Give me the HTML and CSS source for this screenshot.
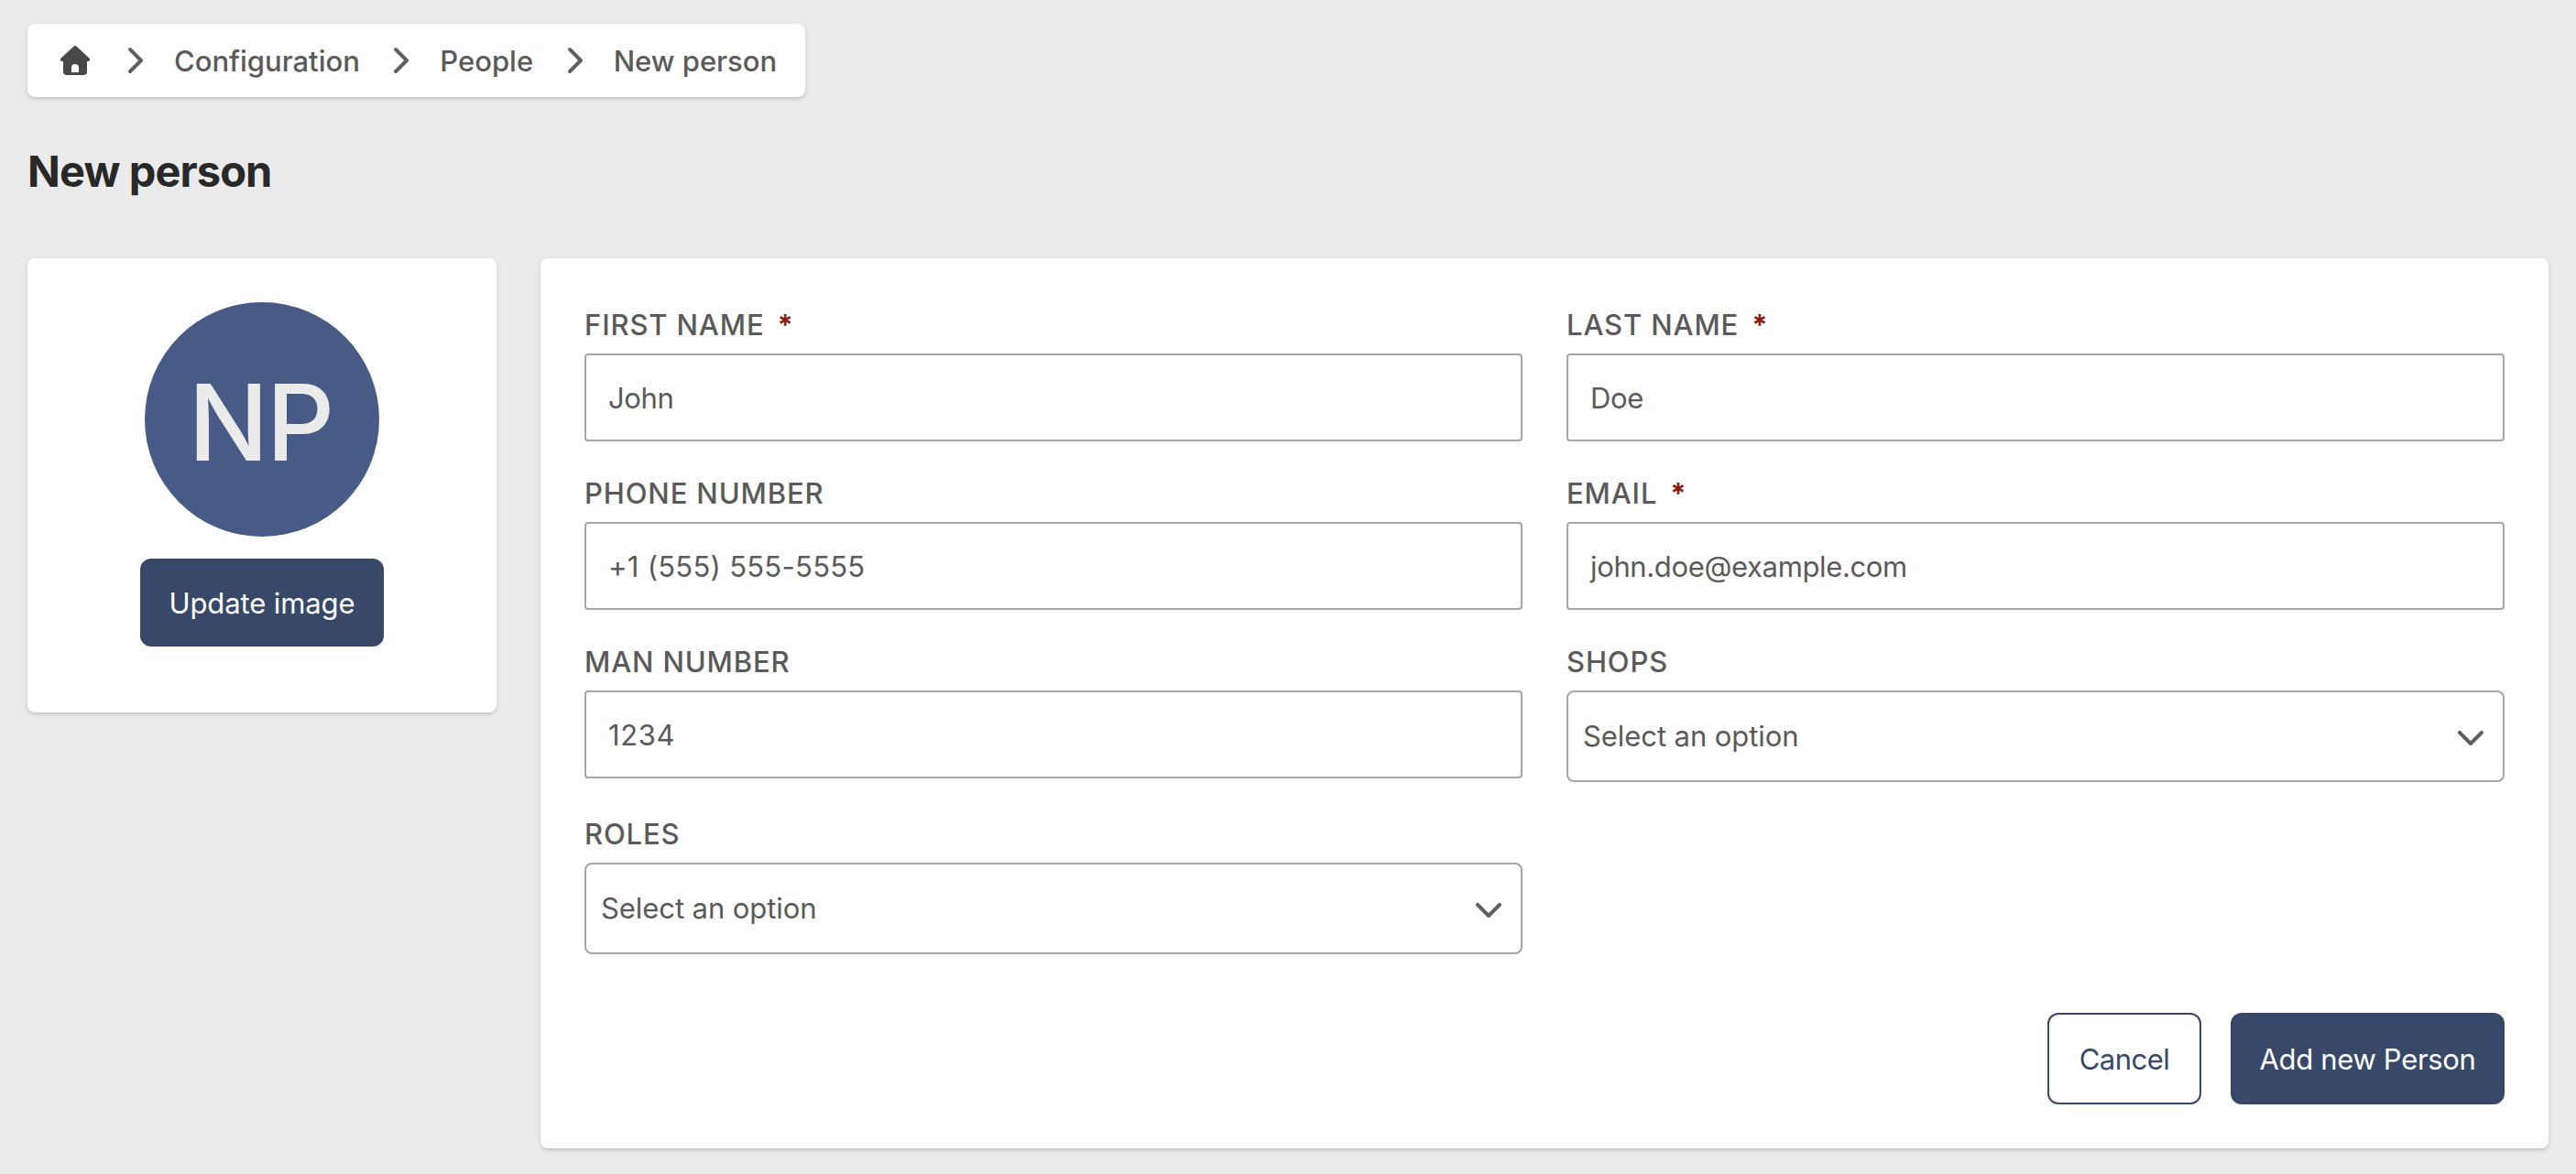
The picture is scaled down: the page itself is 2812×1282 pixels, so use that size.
FILE: index.html
```html
<!DOCTYPE html>
<html lang="en">
<head>
<meta charset="utf-8">
<title>New person</title>
<link rel="stylesheet" href="styles.css">
</head>
<body>
<nav class="breadcrumb card" aria-label="Breadcrumb">
  <svg class="home" viewBox="0 0 32 32"><path fill-rule="evenodd" d="M14.4.7Q16-.7 17.6.7L31.4 13.6C32.6 14.8 32.2 17 30.4 17H29V28Q29 32 25 32H7Q3 32 3 28V17H1.6C-.2 17-.6 14.8.6 13.6ZM12 29H20V23.5Q20 20 16 20Q12 20 12 23.5Z"/></svg>
  <svg class="separator" viewBox="0 0 48 48"><path d="M18 12L30 24L18 36"/></svg>
  <a class="crumb">Configuration</a>
  <svg class="separator" viewBox="0 0 48 48"><path d="M18 12L30 24L18 36"/></svg>
  <a class="crumb">People</a>
  <svg class="separator" viewBox="0 0 48 48"><path d="M18 12L30 24L18 36"/></svg>
  <span class="crumb">New person</span>
</nav>
<h1 class="title">New person</h1>
<main class="content">
  <aside class="profile card">
    <div class="avatar">NP</div>
    <button class="button primary update">Update image</button>
  </aside>
  <form class="form card">
    <div class="fields">
      <div class="field"><label class="label">FIRST NAME<span class="required">*</span></label><div class="input name">John</div></div>
      <div class="field"><label class="label">LAST NAME<span class="required">*</span></label><div class="input name">Doe</div></div>
      <div class="field"><label class="label">PHONE NUMBER</label><div class="input phone">+1 (555) 555-5555</div></div>
      <div class="field"><label class="label">EMAIL<span class="required">*</span></label><div class="input email">john.doe@example.com</div></div>
      <div class="field"><label class="label">MAN NUMBER</label><div class="input number">1234</div></div>
      <div class="field"><label class="label">SHOPS</label><div class="select">Select an option<svg class="caret" viewBox="0 0 28 16"><path d="M2 2L14 14L26 2"/></svg></div></div>
      <div class="field"><label class="label">ROLES</label><div class="select">Select an option<svg class="caret" viewBox="0 0 28 16"><path d="M2 2L14 14L26 2"/></svg></div></div>
    </div>
    <div class="actions">
      <button class="button outline" type="button">Cancel</button>
      <button class="button primary add" type="button">Add new Person</button>
    </div>
  </form>
</main>
</body>
</html>
```
FILE: styles.css
```css
* { box-sizing: border-box; }

body {
  margin: 0;
  padding: 26px 30px 28px;
  background: #ebebeb;
  color: #5a5a5a;
  font: 400 31px/48px Inter, "Liberation Sans", sans-serif;
}

.card {
  background: #fff;
  border-radius: 8px;
  box-shadow: 0 2px 6px rgba(0, 0, 0, .1), 0 2px 4px -2px rgba(0, 0, 0, .2);
}

.breadcrumb {
  display: flex;
  align-items: center;
  width: 849px;
  height: 80px;
  padding-left: 36px;
}
.home { width: 32px; height: 32px; margin-right: 6px; fill: #484848; }
.separator { width: 48px; height: 48px; margin: 0 18px 0 20px; }
.crumb + .separator { margin-left: 21.5px; }
.separator path, .caret path {
  fill: none;
  stroke: #5f5f5f;
  stroke-width: 4;
  stroke-linecap: round;
  stroke-linejoin: round;
}
.crumb { padding-top: 2px; font-weight: 500; letter-spacing: 0; white-space: nowrap; }

.title {
  margin: 49px 0 63px;
  color: #282828;
  font-size: 47px;
  font-weight: 700;
  line-height: 64px;
  letter-spacing: -.9px;
}

.content { display: grid; grid-template-columns: 512px 1fr; gap: 48px; align-items: start; }

.profile {
  display: flex;
  flex-direction: column;
  align-items: center;
  gap: 24px;
  height: 496px;
  padding: 48px;
}
.avatar {
  flex: none;
  width: 256px;
  height: 256px;
  padding-right: 4px;
  border-radius: 50%;
  background: #485b86;
  color: #ebebeb;
  font-size: 116px;
  font-weight: 500;
  line-height: 262px;
  letter-spacing: -2.7px;
  text-align: center;
}

.button {
  height: 100px;
  padding: 2px 0 0;
  border: 2px solid #384868;
  border-radius: 12px;
  font: inherit;
}
.primary { background: #384868; color: #fff; }
.outline { width: 168px; background: #fff; color: #384868; letter-spacing: -.5px; }
.update { width: 266px; height: 96px; letter-spacing: -.1px; }
.add { width: 299px; letter-spacing: -.32px; }

.form { padding: 48px; }
.fields { display: grid; grid-template-columns: 1fr 1fr; gap: 32px 48px; }
.label {
  display: block;
  margin-bottom: 8px;
  font-weight: 500;
  line-height: 49px;
  height: 48px;
  letter-spacing: .87px;
}
.required { margin-left: 14px; color: #8c1c13; font-weight: 700; }
.input {
  height: 96px;
  padding: 0 24px;
  border: 2px solid #a6a6a6;
  border-radius: 4px;
  line-height: 93px;
}
.name { letter-spacing: -.4px; }
.phone { letter-spacing: .27px; }
.email { letter-spacing: -.36px; }
.number { letter-spacing: .6px; }
.select {
  display: flex;
  align-items: center;
  justify-content: space-between;
  height: 100px;
  padding: 0 21px 0 16px;
  border: 2px solid #a6a6a6;
  border-radius: 8px;
  letter-spacing: -.07px;
}
.caret { width: 28px; height: 16px; margin-top: 4px; }

.actions { display: flex; justify-content: flex-end; gap: 32px; margin-top: 64px; }
```
